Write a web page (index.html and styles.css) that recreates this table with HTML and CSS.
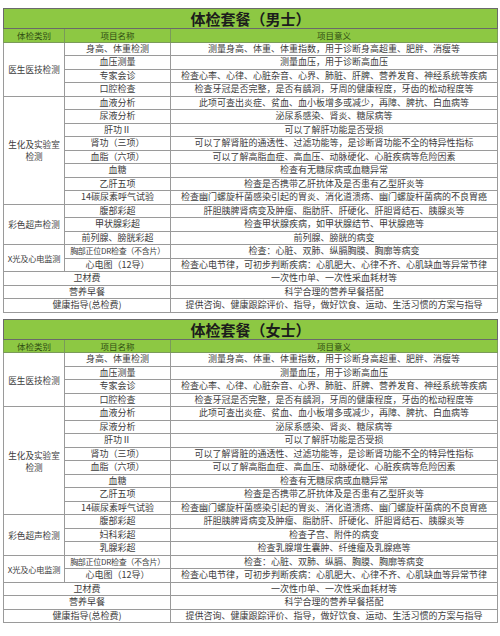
FILE: index.html
```html
<!DOCTYPE html>
<html lang="zh">
<head>
<meta charset="utf-8">
<title>体检套餐</title>
<link rel="stylesheet" href="styles.css">
</head>
<body>
<div class="page">
<table class="pkg">
  <colgroup><col class="c1"><col class="c2"><col class="c3"></colgroup>
  <tr class="title"><td colspan="3">体检套餐（男士）</td></tr>
  <tr class="head"><td>体检类别</td><td>项目名称</td><td>项目意义</td></tr>
  <tr><td rowspan="4" class="cat">医生医技检测</td><td>身高、体重检测</td><td>测量身高、体重、体重指数，用于诊断身高超重、肥胖、消瘦等</td></tr>
  <tr><td>血压测量</td><td>测量血压，用于诊断高血压</td></tr>
  <tr><td>专家会诊</td><td>检查心率、心律、心脏杂音、心界、肺脏、肝脾、营养发育、神经系统等疾病</td></tr>
  <tr><td>口腔检查</td><td>检查牙冠是否完整，是否有龋洞，牙周的健康程度，牙齿的松动程度等</td></tr>
  <tr><td rowspan="8" class="cat">生化及实验室<br>检测</td><td>血液分析</td><td>此项可查出炎症、贫血、血小板增多或减少，再障、脾抗、白血病等</td></tr>
  <tr><td>尿液分析</td><td>泌尿系感染、肾炎、糖尿病等</td></tr>
  <tr><td>肝功Ⅱ</td><td>可以了解肝功能是否受损</td></tr>
  <tr><td>肾功（三项）</td><td>可以了解肾脏的通透性、过滤功能等，是诊断肾功能不全的特异性指标</td></tr>
  <tr><td>血脂（六项）</td><td>可以了解高脂血症、高血压、动脉硬化、心脏疾病等危险因素</td></tr>
  <tr><td>血糖</td><td>检查有无糖尿病或血糖异常</td></tr>
  <tr><td>乙肝五项</td><td>检查是否携带乙肝抗体及是否患有乙型肝炎等</td></tr>
  <tr><td>14碳尿素呼气试验</td><td>检查幽门螺旋杆菌感染引起的胃炎、消化道溃疡、幽门螺旋杆菌病的不良胃癌</td></tr>
  <tr><td rowspan="3" class="cat">彩色超声检测</td><td>腹部彩超</td><td>肝胆胰脾肾病变及肿瘤、脂肪肝、肝硬化、肝胆肾结石、胰腺炎等</td></tr>
  <tr><td>甲状腺彩超</td><td>检查甲状腺疾病，如甲状腺结节、甲状腺癌等</td></tr>
  <tr><td>前列腺、膀胱彩超</td><td>前列腺、膀胱的病变</td></tr>
  <tr><td rowspan="2" class="cat narrow">X光及心电监测</td><td class="tight">胸部正位DR检查（不含片）</td><td>检查：心脏、双肺、纵膈胸膜、胸廓等病变</td></tr>
  <tr><td>心电图（12导）</td><td>检查心电节律，可初步判断疾病：心肌肥大、心律不齐、心肌缺血等异常节律</td></tr>
  <tr><td colspan="2">卫材费</td><td>一次性巾单、一次性采血耗材等</td></tr>
  <tr><td colspan="2">营养早餐</td><td>科学合理的营养早餐搭配</td></tr>
  <tr><td colspan="2">健康指导(总检费)</td><td>提供咨询、健康跟踪评价、指导，做好饮食、运动、生活习惯的方案与指导</td></tr>
</table>

<table class="pkg">
  <colgroup><col class="c1"><col class="c2"><col class="c3"></colgroup>
  <tr class="title"><td colspan="3">体检套餐（女士）</td></tr>
  <tr class="head"><td>体检类别</td><td>项目名称</td><td>项目意义</td></tr>
  <tr><td rowspan="4" class="cat">医生医技检测</td><td>身高、体重检测</td><td>测量身高、体重、体重指数，用于诊断身高超重、肥胖、消瘦等</td></tr>
  <tr><td>血压测量</td><td>测量血压，用于诊断高血压</td></tr>
  <tr><td>专家会诊</td><td>检查心率、心律、心脏杂音、心界、肺脏、肝脾、营养发育、神经系统等疾病</td></tr>
  <tr><td>口腔检查</td><td>检查牙冠是否完整，是否有龋洞，牙周的健康程度，牙齿的松动程度等</td></tr>
  <tr><td rowspan="8" class="cat">生化及实验室<br>检测</td><td>血液分析</td><td>此项可查出炎症、贫血、血小板增多或减少，再障、脾抗、白血病等</td></tr>
  <tr><td>尿液分析</td><td>泌尿系感染、肾炎、糖尿病等</td></tr>
  <tr><td>肝功Ⅱ</td><td>可以了解肝功能是否受损</td></tr>
  <tr><td>肾功（三项）</td><td>可以了解肾脏的通透性、过滤功能等，是诊断肾功能不全的特异性指标</td></tr>
  <tr><td>血脂（六项）</td><td>可以了解高脂血症、高血压、动脉硬化、心脏疾病等危险因素</td></tr>
  <tr><td>血糖</td><td>检查有无糖尿病或血糖异常</td></tr>
  <tr><td>乙肝五项</td><td>检查是否携带乙肝抗体及是否患有乙型肝炎等</td></tr>
  <tr><td>14碳尿素呼气试验</td><td>检查幽门螺旋杆菌感染引起的胃炎、消化道溃疡、幽门螺旋杆菌病的不良胃癌</td></tr>
  <tr><td rowspan="3" class="cat">彩色超声检测</td><td>腹部彩超</td><td>肝胆胰脾肾病变及肿瘤、脂肪肝、肝硬化、肝胆肾结石、胰腺炎等</td></tr>
  <tr><td>妇科彩超</td><td>检查子宫、附件的病变</td></tr>
  <tr><td>乳腺彩超</td><td>检查乳腺增生囊肿、纤维瘤及乳腺癌等</td></tr>
  <tr><td rowspan="2" class="cat narrow">X光及心电监测</td><td class="tight">胸部正位DR检查（不含片）</td><td>检查：心脏、双肺、纵膈、胸膜、胸廓等病变</td></tr>
  <tr><td>心电图（12导）</td><td>检查心电节律，可初步判断疾病：心肌肥大、心律不齐、心肌缺血等异常节律</td></tr>
  <tr><td colspan="2">卫材费</td><td>一次性巾单、一次性采血耗材等</td></tr>
  <tr><td colspan="2">营养早餐</td><td>科学合理的营养早餐搭配</td></tr>
  <tr><td colspan="2">健康指导(总检费)</td><td>提供咨询、健康跟踪评价、指导，做好饮食、运动、生活习惯的方案与指导</td></tr>
</table>
</div>
</body>
</html>
```

FILE: styles.css
```css
html, body {
  margin: 0;
  padding: 0;
  background: #ffffff;
}
.page {
  display: flex;
  flex-direction: column;
  gap: 6px;
  padding: 8px 3px 0 3px;
}
.pkg {
  width: 494px;
  border-collapse: collapse;
  table-layout: fixed;
  border: 1px solid #6a6a6a;
  font-family: "Noto Sans CJK SC", "Noto Sans", sans-serif;
  font-size: 9px;
  color: #3c3c3c;
}
.c1 { width: 61px; }
.c2 { width: 106px; }
.c3 { width: 327px; }
.pkg td {
  border: 1px solid #9a9a9a;
  height: 12.5px;
  padding: 0;
  line-height: 12px;
  text-align: center;
  white-space: nowrap;
  overflow: hidden;
}
.pkg tr.title td {
  background: #8dc843;
  height: 19px;
  line-height: 19px;
  font-size: 15px;
  font-weight: 700;
  color: #1c1c1c;
  border-color: #6a6a6a;
}
.pkg tr.head td {
  background: #8dc843;
  color: #2f4d12;
  font-size: 8.5px;
  border-color: #7a9a5a;
}
.pkg td.cat {
  font-size: 8.6px;
  line-height: 12px;
}
.pkg td.narrow {
  font-size: 8.2px;
  letter-spacing: -0.2px;
}
.pkg td.tight {
  font-size: 8px;
  letter-spacing: -0.3px;
}
```
